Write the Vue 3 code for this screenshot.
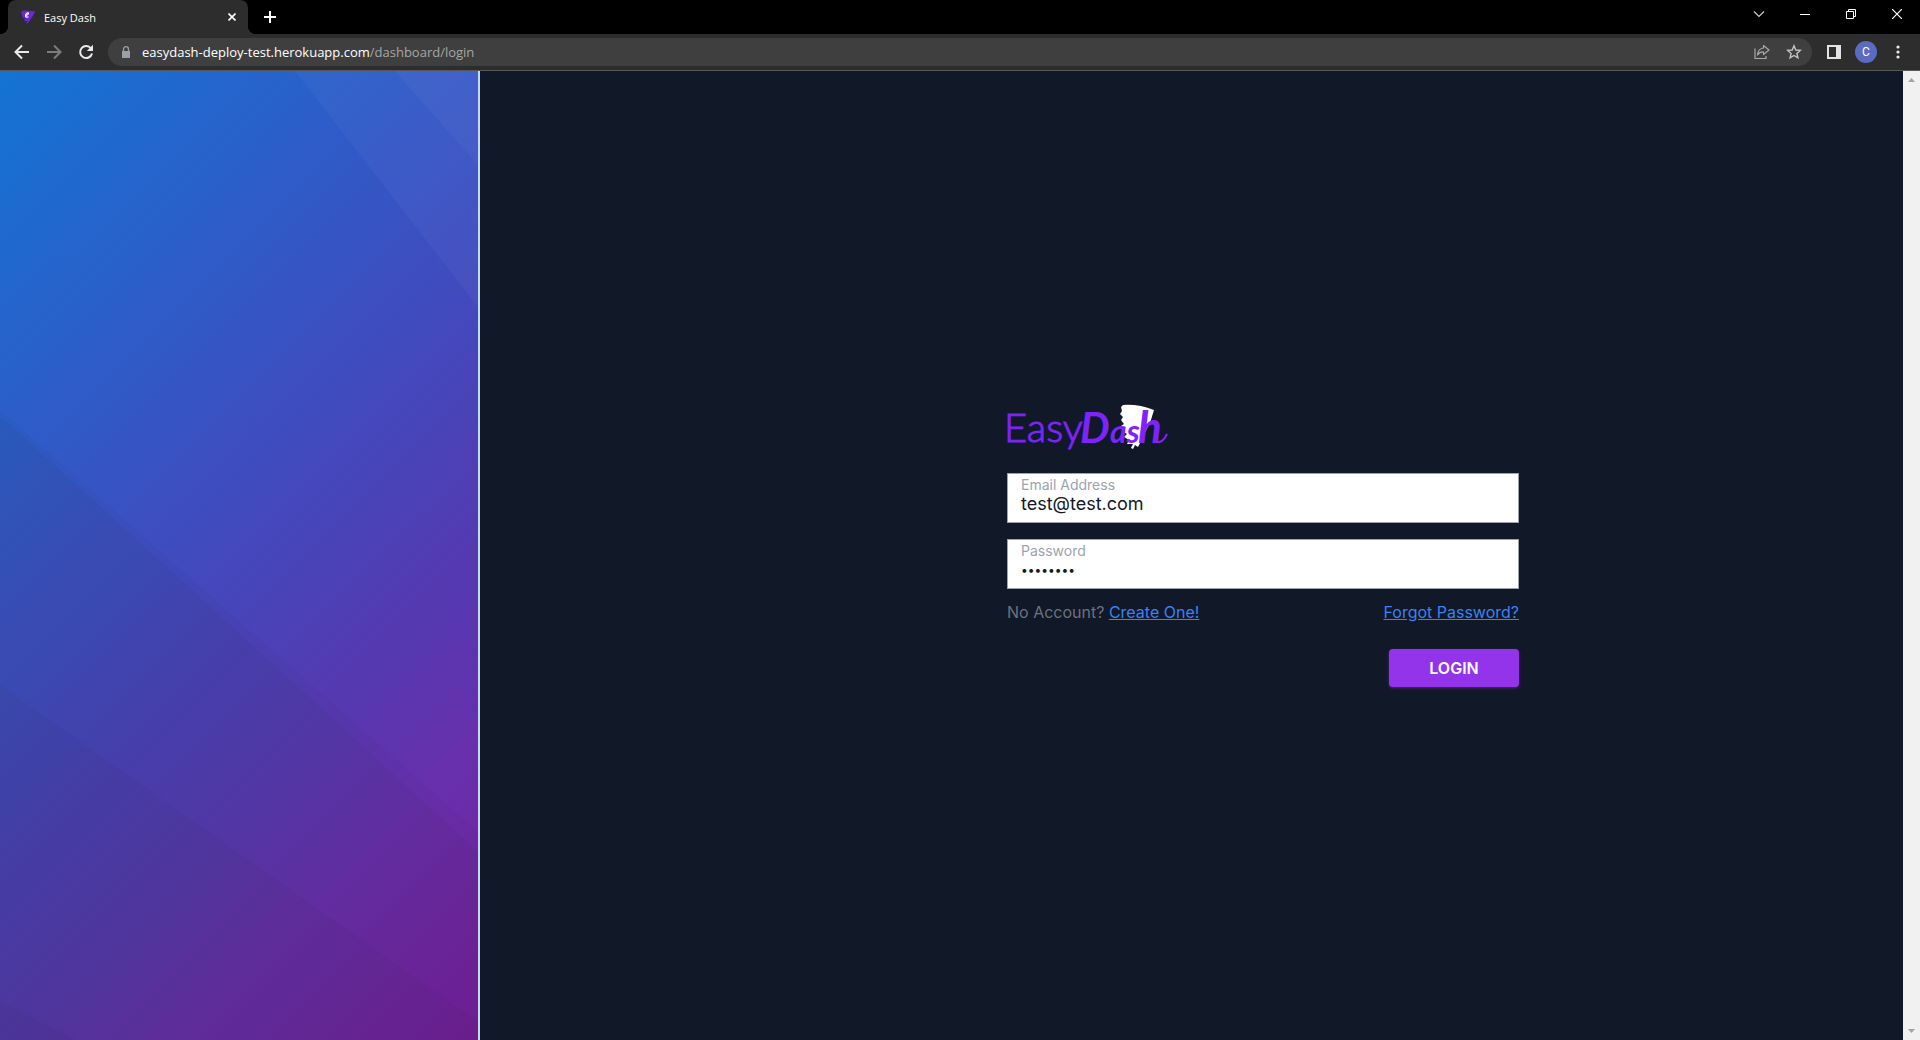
<script setup>
import { ref } from 'vue'

const email = ref('test@test.com')
const password = ref('password')
const address = { host: 'easydash-deploy-test.herokuapp.com', path: '/dashboard/login' }
</script>

<template>
  <div class="window">
    <header>
      <div class="tabstrip">
        <div class="tab">
          <svg class="favicon" width="16" height="16" viewBox="0 0 16 16">
            <path d="M1 3Q4 .5 8 1.800L15 2.200Q14.500 5 11.500 9Q9.500 11 9 13L6 15.500L7.500 12.500L4 11.500L5 9.500Q2 9 2 6Z" fill="#6a27d9" />
            <path d="M6 6.500Q9 5.500 8.500 4Q6 3.500 5.500 6.500Q5.500 9 8.500 7.800" fill="none" stroke="#fff" stroke-width="1.200" />
          </svg>
          <span class="tab-title">Easy Dash</span>
          <button class="tab-close" aria-label="Close tab">
            <svg width="8" height="8" viewBox="0 0 8 8"><path d="M.5.5l7 7M7.500.5l-7 7" stroke="#fff" stroke-width="1.600" /></svg>
          </button>
        </div>
        <button class="new-tab" aria-label="New tab">
          <svg width="12" height="12" viewBox="0 0 12 12"><path d="M6 0v12M0 6h12" stroke="#fff" stroke-width="2" /></svg>
        </button>
        <div class="window-controls">
          <button aria-label="Search tabs">
            <svg width="12" height="12" viewBox="0 0 12 12"><path d="M1 3.500l5 5 5-5" fill="none" stroke="#ccc" stroke-width="1.200" /></svg>
          </button>
          <button aria-label="Minimize">
            <svg width="10" height="10" viewBox="0 0 10 10"><path d="M0 5.500h10" stroke="#fff" /></svg>
          </button>
          <button aria-label="Restore">
            <svg width="10" height="10" viewBox="0 0 10 10"><path d="M.5 2.500h7v7h-7zM2.500 2.500v-2h7v7h-2" fill="none" stroke="#fff" /></svg>
          </button>
          <button aria-label="Close">
            <svg width="10" height="10" viewBox="0 0 10 10"><path d="M0 0l10 10M10 0L0 10" stroke="#fff" stroke-width="1.200" /></svg>
          </button>
        </div>
      </div>

      <div class="toolbar">
        <nav class="tools">
          <button aria-label="Back">
            <svg width="16" height="16" viewBox="0 0 16 16"><path d="M15 8H2M8 1.500L1.500 8 8 14.500" fill="none" stroke="#e8eaed" stroke-width="2" /></svg>
          </button>
          <button aria-label="Forward">
            <svg width="16" height="16" viewBox="0 0 16 16"><path d="M1 8h13M8 1.500L14.500 8 8 14.500" fill="none" stroke="#7c7c7c" stroke-width="2" /></svg>
          </button>
          <button aria-label="Reload">
            <svg width="16" height="16" viewBox="0 0 16 16">
              <path d="M13 4.500A6 6 0 1 0 14 9.500" fill="none" stroke="#e8eaed" stroke-width="2" />
              <path d="M15 .8V7H8.800Z" fill="#e8eaed" />
            </svg>
          </button>
        </nav>
        <div class="address">
          <svg width="10" height="12" viewBox="0 0 10 12">
            <path d="M1 5h8v7H1z" fill="#9aa0a6" />
            <path d="M2.500 5V3.200a2.500 2.500 0 0 1 5 0V5" fill="none" stroke="#9aa0a6" stroke-width="1.300" />
          </svg>
          <span class="url">{{ address.host }}<span class="path">{{ address.path }}</span></span>
          <div class="tools">
            <button aria-label="Share">
              <svg width="16" height="16" viewBox="0 0 16 16" fill="none" stroke="#a8a8a8" stroke-width="1.200">
                <path d="M1 4.500V14.500H12V12" />
                <path d="M9.500 1.500L15 6 9.500 10.500V8Q6 7.500 3.500 11Q4 4.500 9.500 4Z" stroke-linejoin="round" />
              </svg>
            </button>
            <button aria-label="Bookmark">
              <svg width="16" height="16" viewBox="0 0 16 16"><path d="M8 1.800l1.800 4.200 4.500.4-3.400 3 1 4.500L8 11.500l-3.900 2.400 1-4.500-3.400-3 4.500-.4z" fill="none" stroke="#c4c4c4" stroke-width="1.400" /></svg>
            </button>
          </div>
        </div>
        <div class="tools">
          <button aria-label="Side panel">
            <svg width="14" height="14" viewBox="0 0 14 14"><path d="M0 0h14v14H0zM2 2v10h7V2z" fill="#e3e3e3" fill-rule="evenodd" /></svg>
          </button>
          <button aria-label="Profile"><span class="avatar">C</span></button>
          <button aria-label="Menu">
            <svg width="4" height="14" viewBox="0 0 4 14" fill="#e8eaed"><circle cx="2" cy="2" r="1.600" /><circle cx="2" cy="7" r="1.600" /><circle cx="2" cy="12" r="1.600" /></svg>
          </button>
        </div>
      </div>
    </header>

    <div class="viewport">
      <aside>
        <svg viewBox="0 0 478 969" preserveAspectRatio="none" aria-hidden="true">
          <g fill="#fff" fill-opacity=".035">
            <path d="M295 0H478V236Z" />
            <path d="M395 0H478V94Z" />
          </g>
          <g fill="#222">
            <path d="M0 339L478 761V969H0Z" fill-opacity=".03" />
            <path d="M0 345L137 469L478 781V969H0Z" fill-opacity=".05" />
            <path d="M0 614L478 951V969H0Z" fill-opacity=".05" />
            <path d="M0 930L75 969H0Z" fill-opacity=".05" />
          </g>
        </svg>
      </aside>

      <main>
        <form @submit.prevent>
          <svg class="logo" width="176" height="68" viewBox="-6 -6 176 68" role="img" aria-label="EasyDash">
            <path d="M114 2L116 0Q132 -1 147 5L143 18L137 29L134 36L131 42L128 40L126 44L124 43L126 39L120 39L122 35L117 32L120 29L115 26L118 24L114 21L117 19L114 15L116 12L113 9L115 6Z" fill="#fff" />
            <text class="logo-easy" x="-3" y="37">Easy</text>
            <text class="logo-dash" y="38"><tspan x="73" class="cap">D</tspan><tspan x="103">as</tspan><tspan x="131" class="tall">h</tspan></text>
            <path d="M150 37Q156 38 160 29" fill="none" stroke="#7c24fa" stroke-width="2" />
          </svg>

          <div class="field">
            <label for="email">Email Address</label>
            <input id="email" v-model="email" type="email" />
          </div>
          <div class="field">
            <label for="password">Password</label>
            <input id="password" v-model="password" type="password" />
          </div>
          <div class="links">
            <span>No Account? <a href="#create">Create One!</a></span>
            <a href="#forgot">Forgot Password?</a>
          </div>
          <button class="login" type="submit">LOGIN</button>
        </form>
      </main>

      <div class="scrollbar" aria-hidden="true">
        <svg width="7" height="4" viewBox="0 0 7 4"><path d="M0 4L3.500 0L7 4Z" fill="#a3a3a3" /></svg>
        <svg width="7" height="4" viewBox="0 0 7 4"><path d="M0 0L3.500 4L7 0Z" fill="#a3a3a3" /></svg>
      </div>
    </div>
  </div>
</template>

<style>
body {
  margin: 0;
  background: #111827;
}
</style>

<style scoped>
* {
  box-sizing: border-box;
}

button {
  display: flex;
  align-items: center;
  justify-content: center;
  padding: 0;
  border: 0;
  background: none;
  font: inherit;
  color: inherit;
}

.window {
  display: flex;
  flex-direction: column;
  min-height: 100vh;
  font-family: "Open Sans", "Noto Sans", sans-serif;
  color: #fff;
}

.tabstrip {
  display: flex;
  height: 34px;
  padding-left: 8px;
  background: #000;
}

.tab {
  position: relative;
  display: flex;
  align-items: center;
  width: 240px;
  padding: 0 8px 0 12px;
  border-radius: 8px 8px 0 0;
  background: #2d2d2d;
  font-size: 11px;
}

.tab::before,
.tab::after {
  content: "";
  position: absolute;
  bottom: 0;
  width: 8px;
  height: 8px;
}

.tab::before {
  right: 100%;
  background: radial-gradient(circle at 0 0, #000 8px, #2d2d2d 8px);
}

.tab::after {
  left: 100%;
  background: radial-gradient(circle at 100% 0, #000 8px, #2d2d2d 8px);
}

.tab-title {
  flex: 1;
  padding-left: 8px;
}

.tab-close {
  width: 16px;
  height: 16px;
}

.new-tab {
  width: 28px;
  margin-left: 8px;
}

.window-controls {
  display: flex;
  height: 28px;
  margin-left: auto;
}

.window-controls button {
  width: 46px;
}

.toolbar {
  display: flex;
  align-items: center;
  gap: 6px;
  height: 37px;
  padding: 0 6px;
  border-bottom: 1px solid #585858;
  background: #2d2d2d;
}

.tools {
  display: flex;
}

.tools button {
  width: 32px;
  height: 28px;
}

.address {
  display: flex;
  flex: 1;
  align-items: center;
  height: 28px;
  padding: 0 2px 0 13px;
  border-radius: 14px;
  background: #3f3f3f;
  font-size: 13px;
}

.url {
  flex: 1;
  padding-left: 11px;
}

.path {
  color: #a6a6a6;
}

.avatar {
  width: 22px;
  height: 22px;
  border-radius: 50%;
  background: #5c6bc0;
  font: 12px/22px Roboto, sans-serif;
}

.viewport {
  display: flex;
  flex: 1;
}

aside {
  position: relative;
  flex: none;
  width: 25%;
  border-right: 2px solid #bfdbfe;
  background: linear-gradient(135deg, #1374d4 0%, #3952c3 38%, #5638b0 68%, #692fac 80%, #751d9b 100%);
}

aside svg {
  position: absolute;
  width: 100%;
  height: 100%;
}

main {
  display: flex;
  flex: 1;
  align-items: center;
  justify-content: center;
  padding: 0 0 20px 143px;
  font-family: Inter, sans-serif;
}

form {
  display: flex;
  flex-direction: column;
  width: 512px;
}

.logo {
  margin: -6px 0 6px -6px;
  fill: #7c24fa;
}

.logo-easy {
  font: 300 40px Lato, sans-serif;
  stroke: #7c24fa;
  stroke-width: 1px;
}

.logo-dash {
  font: italic 700 32px Lato, sans-serif;
}

.cap {
  font-size: 42px;
}

.tall {
  font-size: 44px;
}

.field {
  display: flex;
  flex-direction: column;
  height: 50px;
  margin-bottom: 16px;
  padding: 3px 13px;
  border: 1px solid #9ca3af;
  background: #fff;
}

.field label {
  font-size: 14px;
  line-height: 16px;
  color: #9ca3af;
}

.field input {
  height: 22px;
  padding: 0;
  border: 0;
  outline: 0;
  background: none;
  font: 18px/22px Inter, sans-serif;
  color: #111827;
}

.field input[type="password"] {
  font-size: 12px;
}

.links {
  display: flex;
  justify-content: space-between;
  margin: -4px 0 26px;
  font-size: 16px;
  line-height: 22px;
  color: #6b7280;
}

.links a {
  color: #3b82f6;
}

.login {
  align-self: flex-end;
  width: 130px;
  height: 38px;
  border-radius: 4px;
  background: #9333ea;
  box-shadow: 0 1px 3px #9333ea80;
  font-size: 16px;
  font-weight: 600;
}

.scrollbar {
  display: flex;
  flex-direction: column;
  align-items: center;
  justify-content: space-between;
  width: 17px;
  padding: 7px 0;
  background: #f1f1f1;
}
</style>
